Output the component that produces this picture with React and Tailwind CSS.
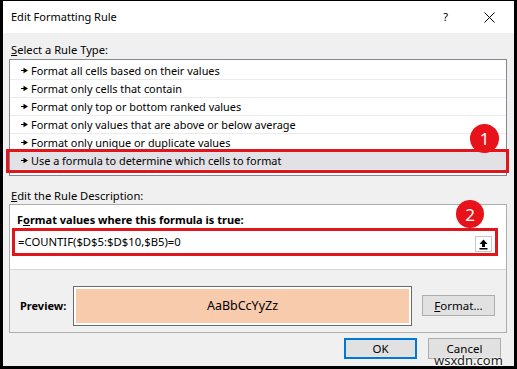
export default function App() {
  const items = [
    "Format all cells based on their values",
    "Format only cells that contain",
    "Format only top or bottom ranked values",
    "Format only values that are above or below average",
    "Format only unique or duplicate values",
    "Use a formula to determine which cells to format",
  ];
  const Arrow = () => (
    <svg width="7" height="7" viewBox="0 0 7 7" className="shrink-0">
      <rect x="0" y="3" width="3" height="1" fill="#000" />
      <polygon points="2.5,0.8 7,3.5 2.5,6.2" fill="#000" />
    </svg>
  );
  return (
    <div className="relative w-[517px] h-[369px] bg-black pt-px px-[3px] pb-[3px] font-['Noto_Sans',sans-serif] text-[11px] leading-[16px] text-black overflow-hidden">
      <div className="relative w-full h-full flex flex-col bg-[#f0f0f0]">
        {/* title bar */}
        <div className="h-[32px] bg-white flex items-center pl-[8px] shrink-0">
          <span className="text-[11px]">Edit Formatting Rule</span>
          <span className="ml-auto text-[11px] mr-[36px]">?</span>
          <svg width="11" height="11" viewBox="0 0 11 11" className="mr-[19px]">
            <path d="M0.5 0.5 L10.5 10.5 M10.5 0.5 L0.5 10.5" stroke="#000" strokeWidth="1" />
          </svg>
        </div>

        <div className="flex flex-col pl-[6px] pr-[7px]">
          <div className="mt-[9px] pl-[2px] h-[16px] text-[11.2px]"><span className="underline">S</span>elect a Rule Type:</div>
          <div className="mt-[1px] h-[117px] border border-[#828790] bg-white pt-[2px] flex flex-col">
            {items.map((t, i) => (
              <div
                key={i}
                className={
                  "h-[18px] flex items-center gap-[3px] pl-[11px] border-b border-[#ececec] " +
                  (i === 5 ? "bg-[#e1e1e6]" : "")
                }
              >
                <Arrow />
                <span className="whitespace-nowrap text-[10.9px]">{t}</span>
              </div>
            ))}
          </div>

          <div className="mt-[12px] pl-[2px] h-[16px] text-[11.2px]"><span className="underline">E</span>dit the Rule Description:</div>
          <div className="h-[129px] border border-[#adadad] flex flex-col">
            <div className="bg-white h-[65px] pt-[7px] border-b border-[#d5d5d5] flex flex-col">
              <div className="pl-[7px] font-bold h-[16px] text-[11px]">F<span className="underline">o</span>rmat values where this formula is true:</div>
              <div className="ml-[2px] mr-[8px] h-[28px] border-[3px] border-[#e0161d] bg-white flex items-center pl-[3px] pr-[3px]">
                <span className="text-[11.3px]">=COUNTIF($D$5:$D$10,$B5)=0</span>
                <div className="ml-auto mt-[4px] w-[17px] h-[16px] border border-[#c8c8c8] bg-white flex items-center justify-center">
                  <svg width="9" height="11" viewBox="0 0 9 11">
                    <path d="M4.5 0.5 L8.5 5 L6 5 L6 8 L3 8 L3 5 L0.5 5 Z" fill="#000" />
                    <rect x="0.5" y="9" width="8" height="1.5" fill="#000" />
                  </svg>
                </div>
              </div>
            </div>
            <div className="flex-1 flex items-start pl-[10px] pt-[16px]">
              <div className="w-[53px] h-[40px] flex items-center font-bold text-[11px]">Preview:</div>
              <div className="w-[339px] h-[40px] border border-[#6a6a6a] bg-white p-[2px]">
                <div className="w-full h-full bg-[#f8cbad] flex items-center justify-center text-[12.5px]">AaBbCcYyZz</div>
              </div>
              <div className="ml-[10px] mt-[9px] w-[73px] h-[21px] border border-[#adadad] bg-[#e1e1e1] flex items-center justify-center text-[11.5px]">
                <span><span className="underline">F</span>ormat...</span>
              </div>
            </div>
          </div>
        </div>

        <div className="flex justify-end gap-[11px] pr-[13px] mt-[5px] text-[11.5px]">
          <div className="w-[73px] h-[21px] border-2 border-[#0078d7] bg-[#e1e1e1] flex items-center justify-center">OK</div>
          <div className="w-[73px] h-[21px] border border-[#adadad] bg-[#e1e1e1] flex items-start pt-[2px] justify-center">Cancel</div>
        </div>

        {/* annotations */}
        <div className="absolute left-[3px] top-[148px] w-[503px] h-[24px] border-[3px] border-[#e0161d]" />
        <div className="absolute left-[467px] top-[123px] w-[29px] h-[29px] rounded-full bg-[#e8121b] text-white flex items-center justify-center text-[17px] leading-none">1</div>
        <div className="absolute left-[453px] top-[199px] w-[28px] h-[28px] rounded-full bg-[#e8121b] text-white flex items-center justify-center text-[17px] leading-none">2</div>
      </div>
      <div className="absolute left-[434px] top-[354px] text-[13px] leading-[13px] text-[#222] [text-shadow:0_0_2px_#fff,0_0_2px_#fff,0_0_2px_#fff]">wsxdn.com</div>
    </div>
  );
}
